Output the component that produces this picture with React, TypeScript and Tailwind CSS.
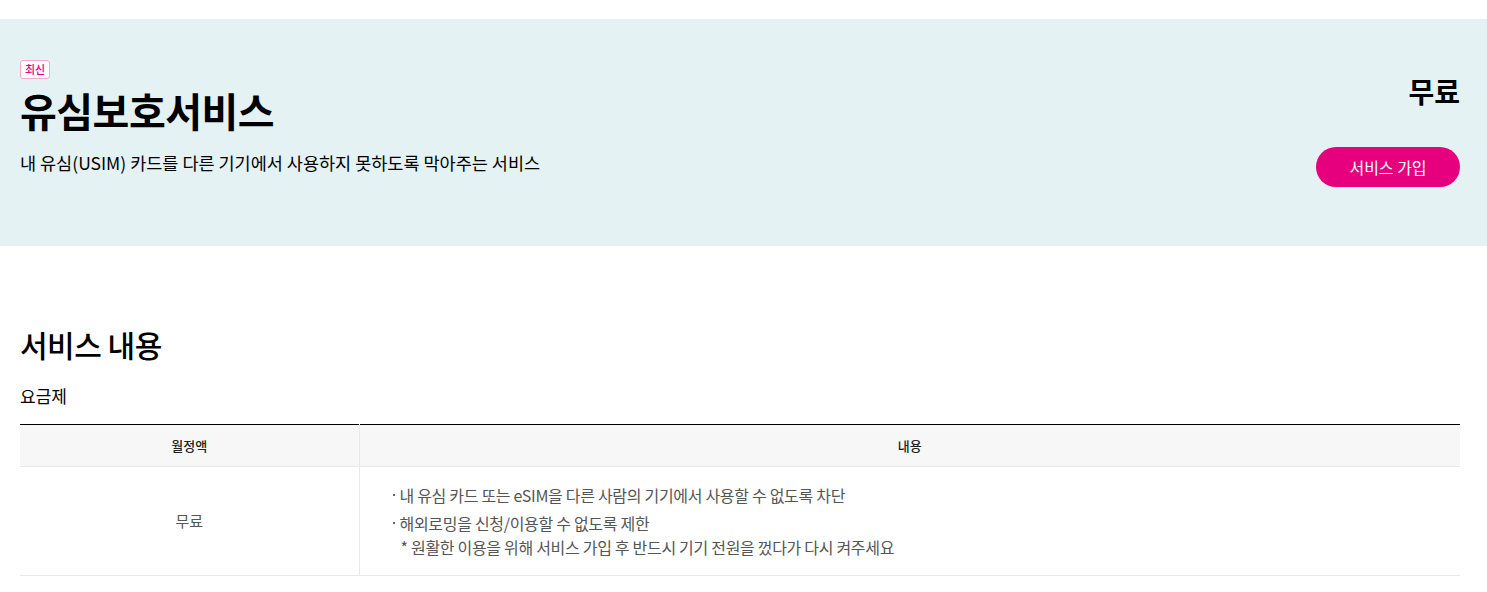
export default function App() {
  const font = { fontFamily: '"Noto Sans CJK KR", "Noto Sans", sans-serif' };
  return (
    <div className="w-full bg-white text-black" style={font}>
      <div className="h-[19px]" />
      <div className="h-[227px] bg-[#e4f2f4] pl-5 pr-[27px] pt-[41px] flex justify-between">
        <div className="flex flex-col items-start">
          <span className="h-[19px] px-[4px] rounded-[3px] border border-[#f7a8cf] bg-white text-[#e6007e] text-[11px] leading-[17px] font-medium">최신</span>
          <h1 className="mt-[5px] text-[40px] leading-[52px] font-bold tracking-[-0.5px]">유심보호서비스</h1>
          <p className="mt-[14px] text-[17.5px] leading-[26px]">내 유심(USIM) 카드를 다른 기기에서 사용하지 못하도록 막아주는 서비스</p>
        </div>
        <div className="flex flex-col items-end pt-[14px]">
          <div className="text-[28px] leading-[34px] font-bold">무료</div>
          <button className="mt-[39px] h-10 w-[144px] rounded-full bg-[#e6007e] text-white text-[16px] leading-10">서비스 가입</button>
        </div>
      </div>
      <div className="pl-5 pr-[27px] pt-[78px]">
        <h2 className="text-[30px] leading-[40px] font-medium tracking-[-0.5px]">서비스 내용</h2>
        <div className="mt-[19px] text-[17px] leading-[26px]">요금제</div>
        <table className="mt-[15px] w-full border-collapse border-t border-black text-center">
          <thead>
            <tr className="bg-[#f7f7f7] h-[42px] border-b border-[#e8e8e8]">
              <th className="w-[339px] text-[13px] font-medium text-[#222] border-r border-[#e8e8e8]">월정액</th>
              <th className="text-[13px] font-medium text-[#222]">내용</th>
            </tr>
          </thead>
          <tbody>
            <tr className="border-b border-[#e8e8e8]">
              <td className="text-[15px] text-[#555] border-r border-[#e8e8e8]">무료</td>
              <td className="text-left pl-[33px] pt-[16px] pb-[16px] text-[16px] text-[#555] leading-[24px] tracking-[-0.3px]">
                <div className="flex items-start">
                  <span className="mt-[11px] mr-[5px] w-[2px] h-[2px] bg-[#666] shrink-0" />
                  <span>내 유심 카드 또는 eSIM을 다른 사람의 기기에서 사용할 수 없도록 차단</span>
                </div>
                <div className="flex items-start mt-[4px]">
                  <span className="mt-[11px] mr-[5px] w-[2px] h-[2px] bg-[#666] shrink-0" />
                  <span>해외로밍을 신청/이용할 수 없도록 제한</span>
                </div>
                <div className="pl-[8px]">* 원활한 이용을 위해 서비스 가입 후 반드시 기기 전원을 껐다가 다시 켜주세요</div>
              </td>
            </tr>
          </tbody>
        </table>
      </div>
    </div>
  );
}
